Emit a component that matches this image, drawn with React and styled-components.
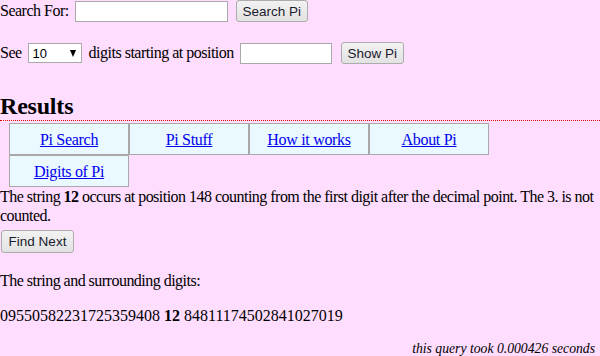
import React from 'react';
import styled, {createGlobalStyle} from 'styled-components';

const Global = createGlobalStyle`
html, body {
    margin: 0;
    padding: 0;
    background: #ffddff;
}
body {
    font-family: "Liberation Serif", "Times New Roman", serif;
    font-size: 16px;
    color: #000;
}
`;

const Page = styled.div`
width: 600px;
height: 356px;
overflow: hidden;
background: #ffddff;
`;

const FormRow = styled.div`
display: flex;
align-items: center;
height: 22px;
margin-top: ${p => p.top || 0}px;
white-space: nowrap;
`;

const Label = styled.span`
margin-left: ${p => p.left || 0}px;
line-height: 18px;
letter-spacing: -0.5px;
`;

const TextBox = styled.input`
box-sizing: border-box;
width: ${p => p.w}px;
height: 21px;
margin: 0 0 0 ${p => p.left || 0}px;
padding: 1px 2px;
border: 1px solid #a9a9a9;
background: #fff;
font-size: 13px;
outline: none;
`;

const Button = styled.button`
display: block;
box-sizing: border-box;
width: ${p => p.w}px;
height: ${p => p.h || 22}px;
margin: ${p => p.top || 0}px 0 0 ${p => p.left || 0}px;
padding: 0;
border: 1px solid #acacac;
border-radius: 3px;
background: linear-gradient(#f2f2f2, #e2e2e2);
font-family: "Liberation Sans", Arial, sans-serif;
font-size: 13.5px;
color: #1a1a2e;
white-space: nowrap;
`;

const Select = styled.div`
box-sizing: border-box;
display: flex;
align-items: center;
justify-content: space-between;
width: 54px;
height: 20px;
margin-left: ${p => p.left || 0}px;
padding: 0 5px 0 4px;
border: 1px solid #a9a9a9;
background: #fff;
font-family: "Liberation Sans", Arial, sans-serif;
font-size: 13px;
`;

const Arrow = styled.span`
width: 0;
height: 0;
border-left: 3.5px solid transparent;
border-right: 3.5px solid transparent;
border-top: 7px solid #000;
`;

const Heading = styled.h2`
margin: 29px 0 0;
font-size: 24px;
font-weight: bold;
line-height: 27px;
border-bottom: 1px dotted #e00000;
letter-spacing: -0.2px;
`;

const Tabs = styled.div`
display: grid;
grid-template-columns: repeat(4, 120px);
margin: 2px 0 0 9px;
`;

const Tab = styled.div`
box-sizing: border-box;
height: 32px;
display: flex;
align-items: center;
justify-content: center;
border: 1px solid #a9a9a9;
background: #eaf8ff;
`;

const TabLink = styled.a`
color: #0000ee;
text-decoration: underline;
padding-top: 1px;
letter-spacing: -0.3px;
`;

const Text = styled.p`
margin: ${p => p.top || 0}px 0 0;
line-height: 19px;
letter-spacing: -0.52px;
`;

const Digits = styled.p`
margin: 16px 0 0;
line-height: 19px;
`;

const Timing = styled.div`
margin-top: 16px;
padding-right: 5px;
text-align: right;
font-style: italic;
font-size: 13.7px;
`;

const tabs = ['Pi Search', 'Pi Stuff', 'How it works', 'About Pi', 'Digits of Pi'];

export default function App() {
    return (
        <Page>
            <Global/>
            <FormRow>
                <Label>Search For:</Label>
                <TextBox w={153} left={6}/>
                <Button w={72} left={8}>Search Pi</Button>
            </FormRow>
            <FormRow top={20}>
                <Label>See</Label>
                <Select left={6}>10<Arrow/></Select>
                <Label left={7}>digits starting at position</Label>
                <TextBox w={92} left={6}/>
                <Button w={63} left={9}>Show Pi</Button>
            </FormRow>
            <Heading>Results</Heading>
            <Tabs>
                {tabs.map((t, i) => (
                    <Tab key={i}><TabLink href="#">{t}</TabLink></Tab>
                ))}
            </Tabs>
            <Text>
                The string <b>12</b> occurs at position 148 counting from the first digit after the decimal point. The 3. is not counted.
            </Text>
            <Button w={73} h={23} top={5} left={1}>Find Next</Button>
            <Text top={18}>The string and surrounding digits:</Text>
            <Digits>09550582231725359408 <b>12</b> 84811174502841027019</Digits>
            <Timing>this query took 0.000426 seconds</Timing>
        </Page>
    );
}
